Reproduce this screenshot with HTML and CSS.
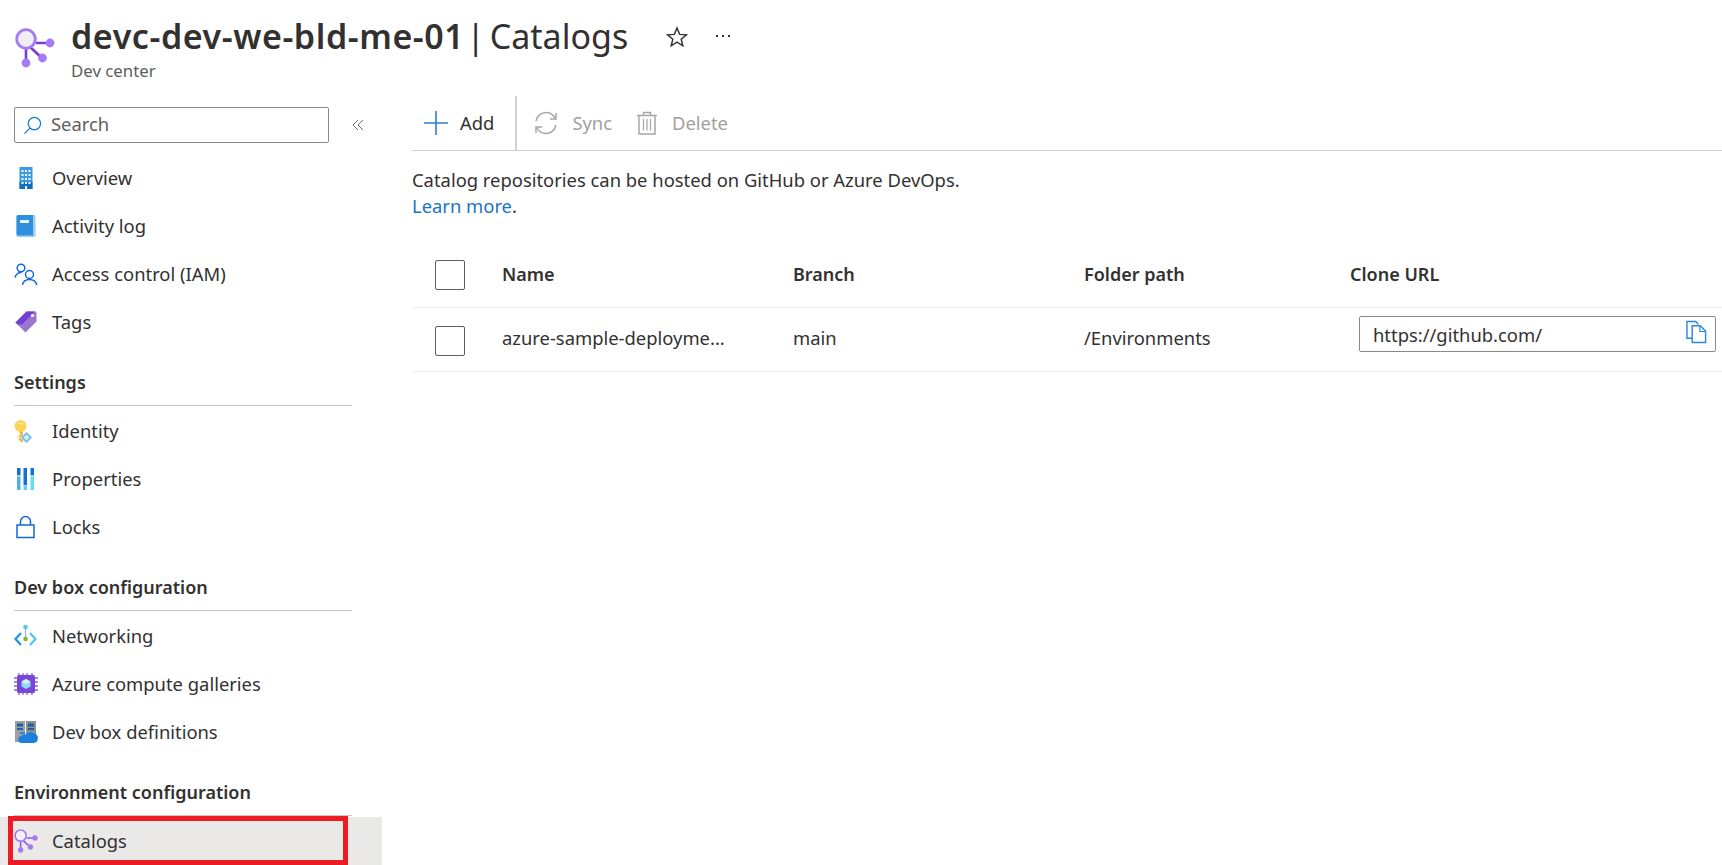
FILE: index.html
```html
<!DOCTYPE html>
<html lang="en">

<head>
    <meta charset="UTF-8">
    <meta name="viewport" content="width=device-width, initial-scale=1.0">
    <title>devc-dev-we-bld-me-01 | Catalogs</title>
    <link rel="stylesheet" href="styles.css">
</head>

<body>
    <header class="page-header">
        <svg class="header-icon" viewBox="0 0 40 40">
            <path d="M21 15H35M15 19L27 30M11 21V35" stroke="#773adc" stroke-width="2.6" fill="none" />
            <circle cx="11" cy="11" r="9.3" fill="#eeeef4" stroke="#a67af4" stroke-width="2.8" />
            <circle cx="35" cy="15" r="4.4" fill="#a67af4" />
            <circle cx="27.5" cy="30" r="4.4" fill="#a67af4" />
            <circle cx="11" cy="35" r="4.4" fill="#a67af4" />
        </svg>
        <div class="header-text">
            <h1><strong>devc-dev-we-bld-me-01</strong> | Catalogs</h1>
            <div class="header-sub">Dev center</div>
        </div>
        <svg class="star-icon" viewBox="0 0 20 20">
            <path d="M10 1.8L12.4 7.6L18.6 8L13.8 12L15.3 18L10 14.7L4.7 18L6.2 12L1.4 8L7.6 7.6Z" fill="none" stroke="#323130" stroke-width="1.3" />
        </svg>
        <div class="more-dots">
            <span></span><span></span><span></span>
        </div>
    </header>

    <div class="layout">
        <aside class="sidebar">
            <div class="search-row">
                <div class="search-box">
                    <svg class="search-icon" viewBox="0 0 20 20">
                        <circle cx="12" cy="8" r="6.5" fill="none" stroke="#0f78d4" stroke-width="1.3" />
                        <path d="M7.3 12.7L1.5 18.5" stroke="#0f78d4" stroke-width="1.3" />
                    </svg>
                    <span class="search-text">Search</span>
                </div>
                <svg class="collapse-icon" viewBox="0 0 12 12">
                    <path d="M6 1L1 6L6 11M11 1L6 6L11 11" fill="none" stroke="#605e5c" stroke-width="0.9" />
                </svg>
            </div>

            <nav>
                <a class="nav-item">
                    <svg class="nav-icon" viewBox="0 0 24 24">
                        <rect x="5.5" y="1" width="13" height="22" fill="#3b9ae6" />
                        <rect x="5.5" y="16" width="13" height="7" fill="#0f6fc6" />
                        <path d="M7.5 4h2v2h-2zM11 4h2v2h-2zM14.5 4h2v2h-2zM7.5 8h2v2h-2zM11 8h2v2h-2zM14.5 8h2v2h-2zM7.5 12h2v2h-2zM11 12h2v2h-2zM14.5 12h2v2h-2zM7.5 16h2v2h-2zM11 16h2v2h-2zM14.5 16h2v2h-2zM11 20h2v3h-2z" fill="#fff" />
                    </svg>
                    Overview
                </a>
                <a class="nav-item">
                    <svg class="nav-icon" viewBox="0 0 24 24">
                        <rect x="2.5" y="1" width="19" height="22" rx="1.5" fill="#9fcdf1" />
                        <path d="M2.5 2.5a1.5 1.5 0 0 1 1.5-1.5h15v20.5h-15a1.5 1.5 0 0 1-1.5-1.5z" fill="#2f8fdf" />
                        <rect x="6" y="6" width="9" height="3" fill="#eaf4fc" />
                    </svg>
                    Activity log
                </a>
                <a class="nav-item">
                    <svg class="nav-icon" viewBox="0 0 24 24">
                        <g fill="none" stroke="#1268d8" stroke-width="1.5">
                            <circle cx="7" cy="6" r="3.8" />
                            <path d="M1 15.5C2 11.5 5 10.5 7.5 10.5" />
                            <circle cx="15.5" cy="12.5" r="4" />
                            <path d="M8.5 23C9 19.5 12 17.5 15.5 17.5S22 19.5 22.8 23" />
                        </g>
                    </svg>
                    Access control (IAM)
                </a>
                <a class="nav-item">
                    <svg class="nav-icon" viewBox="0 0 24 24">
                        <path d="M1.5 12.5L12.5 1.5L21 1.5C21.8 1.5 22.5 2.2 22.5 3L22.5 11.5L11.5 22.5Z" fill="#9a76cf" />
                        <path d="M1.5 12.5L12.5 1.5L21 1.5L8 14.5L3.5 14.5Z" fill="#6f3fd6" />
                        <circle cx="18.5" cy="5.5" r="1.6" fill="#fff" />
                    </svg>
                    Tags
                </a>
            </nav>

            <div class="nav-section">Settings</div>
            <nav>
                <a class="nav-item">
                    <svg class="nav-icon" viewBox="0 0 24 24">
                        <path d="M4.5 11h4.5v12h-2.500v-1.500h-2v-2h2v-1h-2v-2h2z" fill="#e8b93c" />
                        <circle cx="6.5" cy="7" r="6" fill="#fcd353" />
                        <rect x="3.5" y="4" width="6" height="1.3" fill="#f2e6b0" />
                        <path d="M12.5 12.5L19 18.5L12.5 24.5L6.5 18.5Z" fill="#fff" />
                        <path d="M12.5 13L18 18.5L12.5 24L7 18.5Z" fill="#73bde8" />
                        <path d="M12.5 15.5L15.5 18.5L12.5 21.5L9.5 18.5Z" fill="#d3ecf9" />
                    </svg>
                    Identity
                </a>
                <a class="nav-item">
                    <svg class="nav-icon" viewBox="0 0 24 24">
                        <rect x="3" y="1" width="3.5" height="7.5" fill="#1273d2" />
                        <rect x="3" y="8.5" width="3.5" height="1" fill="#c9d6de" />
                        <rect x="3" y="9.5" width="3.5" height="13.5" fill="#4db2de" />
                        <rect x="9.5" y="1" width="3.5" height="17" fill="#1273d2" />
                        <rect x="9.5" y="18" width="3.5" height="1" fill="#c9d6de" />
                        <rect x="9.5" y="19" width="3.5" height="4" fill="#59d3ef" />
                        <rect x="16.5" y="1" width="3.5" height="7.5" fill="#1273d2" />
                        <rect x="16.5" y="8.5" width="3.5" height="1" fill="#c9d6de" />
                        <rect x="16.5" y="9.5" width="3.5" height="13.5" fill="#66dcf7" />
                    </svg>
                    Properties
                </a>
                <a class="nav-item">
                    <svg class="nav-icon" viewBox="0 0 24 24">
                        <rect x="3" y="10" width="17" height="12.5" fill="#fff" stroke="#1268d8" stroke-width="1.5" />
                        <path d="M6.5 10V6.5a5 5 0 0 1 10 0V10" fill="none" stroke="#1268d8" stroke-width="1.5" />
                    </svg>
                    Locks
                </a>
            </nav>

            <div class="nav-section">Dev box configuration</div>
            <nav>
                <a class="nav-item">
                    <svg class="nav-icon" viewBox="0 0 24 24">
                        <path d="M11.5 3V15" stroke="#9db4c4" stroke-width="1.2" />
                        <circle cx="11.5" cy="3" r="2.3" fill="#50c4ee" />
                        <circle cx="11.5" cy="15" r="2.3" fill="#7cb82f" />
                        <path d="M7 9L1.5 15L7 21" fill="none" stroke="#1b93eb" stroke-width="2.2" />
                        <path d="M16 9L21.5 15L16 21" fill="none" stroke="#50c4ee" stroke-width="2.2" />
                    </svg>
                    Networking
                </a>
                <a class="nav-item">
                    <svg class="nav-icon" viewBox="0 0 24 24">
                        <path d="M5 1v22M9 1v22M13 1v22M18 1v22M0 6h24M0 10h24M0 14h24M0 18h24" stroke="#8a5ce6" stroke-width="1.3" />
                        <rect x="3" y="3" width="18" height="18" rx="1.5" fill="#7747d8" />
                        <path d="M12 7L16.5 9.5V14.5L12 17L7.5 14.5V9.5Z" fill="#8fdcf5" />
                        <path d="M12 7L16.5 9.5L12 12L7.5 9.5Z" fill="#d4f3fc" />
                    </svg>
                    Azure compute galleries
                </a>
                <a class="nav-item">
                    <svg class="nav-icon" viewBox="0 0 24 24">
                        <rect x="1" y="1" width="10" height="21" fill="#9aa0a6" />
                        <rect x="12" y="1" width="10" height="14" fill="#8a9096" />
                        <path d="M3 3.5h6v3h-6zM14 3.5h6v3h-6zM3 8h6v2h-6zM14 8h6v2h-6z" fill="#1f5f9e" />
                        <path d="M6 12h5v2h-5z" fill="#2b88d8" />
                        <path d="M8 23a3.5 3.5 0 0 1-.5-7A4 4 0 0 1 12 14.5 5.5 5.5 0 0 1 20 13.5 4.8 4.8 0 0 1 19.5 23Z" fill="#1b7fdc" />
                    </svg>
                    Dev box definitions
                </a>
            </nav>

            <div class="nav-section">Environment configuration</div>
            <nav>
                <a class="nav-item nav-item-active">
                    <svg class="nav-icon" viewBox="0 0 40 40">
                        <path d="M21 15H35M15 19L27 30M11 21V35" stroke="#8c5ce6" stroke-width="2.6" fill="none" />
                        <circle cx="11" cy="11" r="9.3" fill="#f3f1f8" stroke="#a67af4" stroke-width="2.8" />
                        <circle cx="35" cy="15" r="4.4" fill="#a67af4" />
                        <circle cx="27.5" cy="30" r="4.4" fill="#a67af4" />
                        <circle cx="11" cy="35" r="4.4" fill="#a67af4" />
                    </svg>
                    Catalogs
                </a>
            </nav>
        </aside>

        <main class="content">
            <div class="toolbar">
                <button class="tool-btn tool-add">
                    <svg class="tool-icon" viewBox="0 0 24 24">
                        <path d="M12 0V24M0 12H24" stroke="#2f7ed8" stroke-width="1.6" />
                    </svg>
                    Add
                </button>
                <div class="tool-divider"></div>
                <button class="tool-btn tool-disabled tool-sync">
                    <svg class="tool-icon" viewBox="0 0 24 24">
                        <g fill="none" stroke="#a8a6a4" stroke-width="1.5">
                            <path d="M2 10C3 5 7 1.5 12 1.5C16 1.5 19 3.5 21 7" />
                            <path d="M22 2V8H16" />
                            <path d="M22 14C21 19 17 22.5 12 22.5C8 22.5 5 20.5 3 17" />
                            <path d="M2 22V16H8" />
                        </g>
                    </svg>
                    Sync
                </button>
                <button class="tool-btn tool-disabled tool-delete">
                    <svg class="tool-icon" viewBox="0 0 24 24">
                        <g fill="none" stroke="#a8a6a4" stroke-width="1.5">
                            <path d="M2 4.5H22M8.5 4.5V1.5H15.5V4.5" />
                            <path d="M4 4.5V23H20V4.5" />
                            <path d="M8.5 8V19.5M12 8V19.5M15.5 8V19.5" stroke-width="1.2" />
                        </g>
                    </svg>
                    Delete
                </button>
            </div>

            <p class="intro">Catalog repositories can be hosted on GitHub or Azure DevOps.<br><a class="learn-link">Learn more</a>.</p>

            <table class="catalog-table">
                <thead>
                    <tr>
                        <th class="col-check"><span class="checkbox"></span></th>
                        <th class="col-name">Name</th>
                        <th class="col-branch">Branch</th>
                        <th class="col-folder">Folder path</th>
                        <th>Clone URL</th>
                    </tr>
                </thead>
                <tbody>
                    <tr>
                        <td class="col-check"><span class="checkbox"></span></td>
                        <td class="col-name">azure-sample-deployme...</td>
                        <td>main</td>
                        <td>/Environments</td>
                        <td>
                            <div class="url-box">
                                <span>https://github.com/</span>
                                <svg class="copy-icon" viewBox="0 0 22 24">
                                    <path d="M6.5 18.5H1V1H10L13 4" fill="none" stroke="#2b88d8" stroke-width="1.5" />
                                    <path d="M6.5 5.5H15L20.5 11V23H6.5Z" fill="#fff" stroke="#2b88d8" stroke-width="1.5" />
                                    <path d="M14.5 5.5V11.5H20.5" fill="none" stroke="#2b88d8" stroke-width="1.2" />
                                </svg>
                            </div>
                        </td>
                    </tr>
                </tbody>
            </table>
        </main>
    </div>
</body>

</html>
```

FILE: styles.css
```css
body {
    font-family: "Noto Sans", "Open Sans", sans-serif;
    margin: 0;
    padding: 0;
    height: 865px;
    overflow: hidden;
    background-color: #fff;
    color: #323130;
    font-size: 18.4px;
}

.page-header {
    display: flex;
    align-items: flex-start;
    height: 95px;
    padding-left: 15px;
    box-sizing: border-box;
}

.header-icon {
    width: 40px;
    height: 40px;
    margin-top: 28px;
    flex: none;
}

.header-text {
    margin-left: 16px;
    padding-top: 12px;
}

h1 {
    margin: 0;
    font-size: 34px;
    line-height: 48px;
    font-weight: 400;
    color: #323130;
    white-space: nowrap;
    word-spacing: -4px;
}

h1 strong {
    font-weight: 600;
    letter-spacing: 0.57px;
    margin-right: -3px;
}

.header-sub {
    font-size: 16.8px;
    line-height: 22px;
    color: #605e5c;
}

.star-icon {
    width: 22px;
    height: 22px;
    margin-top: 26px;
    margin-left: 38px;
    flex: none;
}

.more-dots {
    display: flex;
    gap: 4px;
    margin-top: 35px;
    margin-left: 28px;
}

.more-dots span {
    width: 2px;
    height: 2px;
    background-color: #323130;
}

.layout {
    display: flex;
}

.sidebar {
    width: 382px;
    flex: none;
}

.search-row {
    display: flex;
    align-items: center;
    padding: 12px 0 11px 14px;
}

.search-box {
    display: flex;
    align-items: center;
    width: 315px;
    height: 36px;
    box-sizing: border-box;
    border: 1px solid #8a8886;
    border-radius: 2px;
    padding-left: 8px;
    color: #605e5c;
}

.search-icon {
    width: 19px;
    height: 19px;
    margin-right: 9px;
}

.search-text {
    padding-bottom: 4px;
}

.collapse-icon {
    width: 12px;
    height: 12px;
    margin-left: 23px;
}

.nav-item {
    display: flex;
    align-items: center;
    height: 48px;
    box-sizing: border-box;
    padding-left: 14px;
    padding-bottom: 2px;
}

.nav-icon {
    width: 24px;
    height: 24px;
    margin-top: 2px;
    margin-right: 14px;
    flex: none;
}

.nav-section {
    height: 60px;
    width: 338px;
    margin-left: 14px;
    box-sizing: border-box;
    padding-top: 24px;
    font-size: 18px;
    line-height: 24px;
    font-weight: 600;
    border-bottom: 1px solid #c8c6c4;
    margin-bottom: 1px;
}

.nav-item-active {
    background-color: #ebe9e8;
    position: relative;
}

/* red highlight drawn over the selected row */
.nav-item-active::after {
    content: "";
    position: absolute;
    left: 8px;
    top: -1px;
    width: 340px;
    height: 49px;
    box-sizing: border-box;
    border: 5px solid #ed1c24;
}

.content {
    flex: 1;
    margin-left: 30px;
    min-width: 0;
}

.toolbar {
    display: flex;
    align-items: center;
    height: 56px;
    border-bottom: 1px solid #d2d0ce;
    box-sizing: border-box;
}

.tool-btn {
    display: flex;
    align-items: center;
    border: none;
    background: none;
    padding: 0;
    font: inherit;
    color: #323130;
}

.tool-icon {
    width: 24px;
    height: 24px;
    margin-right: 12px;
}

.tool-add {
    margin-left: 12px;
}

.tool-divider {
    width: 2px;
    height: 54px;
    background-color: #d2d0ce;
    margin-left: 21px;
}

.tool-disabled {
    color: #a19f9d;
}

.tool-sync {
    margin-left: 17px;
}

.tool-sync .tool-icon {
    margin-right: 14px;
}

.tool-delete {
    margin-left: 23px;
}

.tool-delete .tool-icon {
    margin-right: 13px;
}

.intro {
    margin: 16px 0 0;
    line-height: 26px;
}

.learn-link {
    color: #1a73c9;
}

.catalog-table {
    width: 100%;
    margin-top: 23px;
    border-collapse: collapse;
    table-layout: fixed;
}

th,
td {
    text-align: left;
    padding: 0;
    border-bottom: 1px solid #edebe9;
}

th {
    height: 63px;
    padding-bottom: 2px;
    font-size: 18px;
    font-weight: 600;
    vertical-align: middle;
}

td {
    height: 58px;
    padding-bottom: 5px;
}

.col-check {
    width: 90px;
    padding-left: 23px;
    box-sizing: border-box;
}

th.col-check {
    padding-bottom: 0;
}

td.col-check {
    padding-top: 2px;
    padding-bottom: 0;
}

.col-name,
.col-branch,
.col-folder {
    width: 291px;
}

th.col-folder {
    width: 266px;
}

.checkbox {
    display: block;
    width: 28px;
    height: 28px;
    border: 1px solid #605e5c;
    border-radius: 2px;
}

.url-box {
    display: flex;
    align-items: center;
    justify-content: space-between;
    width: 357px;
    height: 36px;
    margin-left: 9px;
    margin-bottom: 6px;
    box-sizing: border-box;
    border: 1px solid #8a8886;
    border-radius: 2px;
    padding: 0 8px 0 13px;
}

.copy-icon {
    width: 21px;
    height: 24px;
    margin-bottom: 4px;
}
```
